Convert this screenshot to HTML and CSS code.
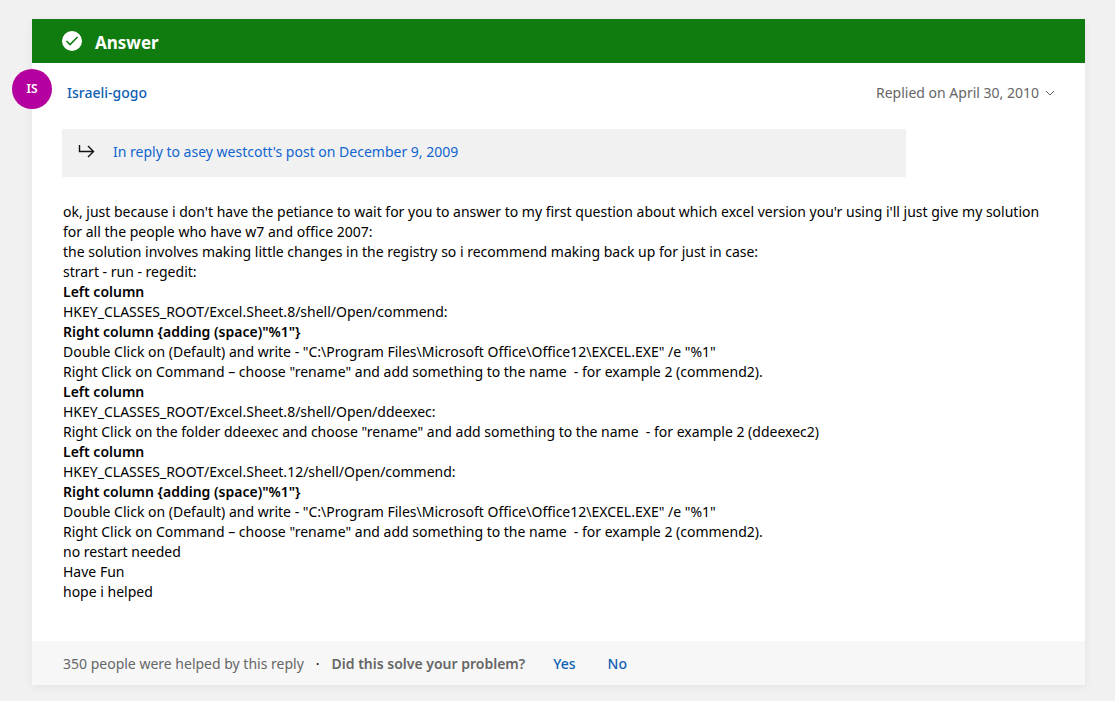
FILE: index.html
```
<!DOCTYPE html>
<html lang="en">
<head>
    <meta charset="UTF-8">
    <meta name="viewport" content="width=device-width, initial-scale=1.0">
    <title>Answer</title>
    <link rel="stylesheet" href="styles.css">
</head>
<body>
    <article class="answer">
        <header class="answer-header">
            <svg class="check-icon" viewBox="0 0 20 20" aria-hidden="true">
                <circle cx="10" cy="10" r="10" fill="#fff"/>
                <path d="M4.5 10l3.5 3.5L15.5 6" fill="none" stroke="#107c10" stroke-width="1.6"/>
            </svg>
            <h2>Answer</h2>
        </header>
        <div class="answer-body">
            <div class="author-row">
                <span class="avatar">IS</span>
                <a class="author" href="#">Israeli-gogo</a>
                <button class="date" type="button">Replied on April 30, 2010
                    <svg class="chevron" viewBox="0 0 10 6" aria-hidden="true">
                        <path d="M1 1l4 4 4-4" fill="none" stroke="#666"/>
                    </svg>
                </button>
            </div>
            <div class="in-reply">
                <svg class="reply-icon" viewBox="0 0 18 16" aria-hidden="true">
                    <path d="M1.5 1v6.5h14M10 2l5.5 5.5L10 13" fill="none" stroke="#111" stroke-width="1.4"/>
                </svg>
                <a href="#">In reply to asey westcott's post on December 9, 2009</a>
            </div>
            <div class="message">
                <p>ok, just because i don't have the petiance to wait for you to answer to my first question about which excel version you'r using i'll just give my solution for all the people who have w7 and office 2007:</p>
                <p>the solution involves making little changes in the registry so i recommend making back up for just in case:</p>
                <p>strart - run - regedit:</p>
                <p><strong>Left column</strong></p>
                <p>HKEY_CLASSES_ROOT/Excel.Sheet.8/shell/Open/commend:</p>
                <p><strong>Right column {adding (space)"%1"}</strong></p>
                <p>Double Click on (Default) and write - "C:\Program Files\Microsoft Office\Office12\EXCEL.EXE" /e "%1"</p>
                <p>Right Click on Command – choose "rename" and add something to the name&nbsp; - for example 2 (commend2).</p>
                <p><strong>Left column</strong></p>
                <p>HKEY_CLASSES_ROOT/Excel.Sheet.8/shell/Open/ddeexec:</p>
                <p>Right Click on the folder ddeexec and choose "rename" and add something to the name&nbsp; - for example 2 (ddeexec2)</p>
                <p><strong>Left column</strong></p>
                <p>HKEY_CLASSES_ROOT/Excel.Sheet.12/shell/Open/commend:</p>
                <p><strong>Right column {adding (space)"%1"}</strong></p>
                <p>Double Click on (Default) and write - "C:\Program Files\Microsoft Office\Office12\EXCEL.EXE" /e "%1"</p>
                <p>Right Click on Command – choose "rename" and add something to the name&nbsp; - for example 2 (commend2).</p>
                <p>no restart needed</p>
                <p>Have Fun</p>
                <p>hope i helped</p>
            </div>
        </div>
        <footer class="answer-footer">
            <span>350 people were helped by this reply</span>
            <span class="dot">·</span>
            <span class="question">Did this solve your problem?</span>
            <div class="votes">
                <button class="vote" type="button">Yes</button>
                <button class="vote" type="button">No</button>
            </div>
        </footer>
    </article>
</body>
</html>
```
FILE: styles.css
```
body {
    margin: 0;
    padding: 19px 30px 16px 32px;
    background-color: #f1f1f1;
    font-family: "Segoe UI", "Noto Sans", sans-serif;
    font-size: 14px;
    line-height: 20px;
    color: #000;
}
a {
    color: #1065d0;
    text-decoration: none;
}
button {
    padding: 0;
    border: none;
    background: none;
    font: inherit;
    cursor: pointer;
}
.answer {
    background-color: #fff;
    box-shadow: 0 2px 8px rgba(0, 0, 0, 0.06);
}
.answer-header {
    display: flex;
    align-items: center;
    gap: 13px;
    height: 44px;
    padding: 0 30px;
    background-color: #107c10;
    color: #fff;
}
.answer-header h2 {
    margin: 0;
    padding-top: 4px;
    font-size: 17px;
    font-weight: 700;
}
.check-icon {
    width: 20px;
    height: 20px;
}
.answer-body {
    padding: 20px 30px 39px;
}
.author-row {
    position: relative;
    display: flex;
    align-items: center;
    justify-content: space-between;
    padding-left: 5px;
}
.avatar {
    position: absolute;
    left: -50px;
    top: -14px;
    width: 40px;
    height: 40px;
    border-radius: 50%;
    background-color: #b4009e;
    color: #fff;
    font-size: 12px;
    font-weight: 600;
    line-height: 40px;
    text-align: center;
}
.author {
    color: #0f5fb4;
    font-weight: 500;
}
.date {
    display: flex;
    align-items: center;
    gap: 6px;
    color: #666;
}
.chevron {
    width: 10px;
    height: 6px;
}
.in-reply {
    display: flex;
    align-items: center;
    gap: 17px;
    box-sizing: border-box;
    width: 85%;
    margin: 26px 0 25px;
    padding: 13px 16px 15px;
    background-color: #f1f1f1;
}
.reply-icon {
    width: 18px;
    height: 16px;
}
.message {
    padding-left: 1px;
}
.message p {
    margin: 0;
}
.message strong {
    font-weight: 600;
}
.answer-footer {
    display: flex;
    align-items: center;
    padding: 13px 31px 11px;
    background-color: #f7f7f7;
    color: #666;
}
.dot {
    margin: 0 12px;
    color: #000;
}
.question {
    font-weight: 600;
}
.votes {
    display: flex;
    gap: 32px;
    margin-left: 28px;
}
.vote {
    color: #0f5fb4;
    font-weight: 500;
}
```
